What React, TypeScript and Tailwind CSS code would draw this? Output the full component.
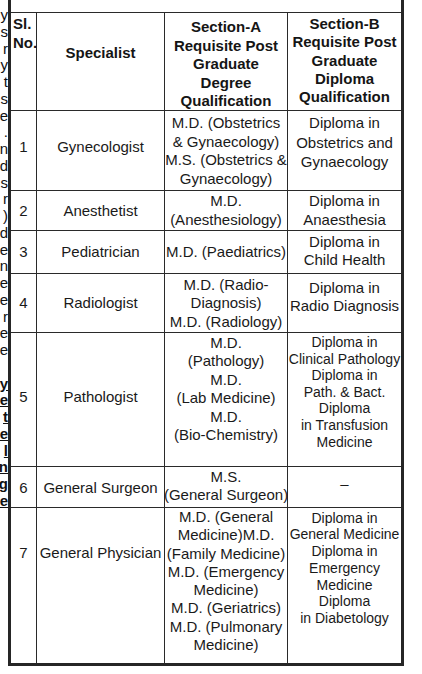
import React from 'react';

type Cell = {
  lines: string[];
  pt: string;
  leading: string;
  size?: string;
};

type Row = {
  h: string;
  no: Cell;
  spec: Cell;
  a: Cell;
  b: Cell;
  last?: boolean;
};

// last letters of the neighbouring column's text, seen at the left edge
const margin: { t: string; bold?: boolean }[] = [
  { t: 'y' }, { t: 's' }, { t: 'r' }, { t: 'y' }, { t: 't' },
  { t: 's' }, { t: 'e' }, { t: '.' }, { t: 'n' }, { t: 'd' }, { t: 's' },
  { t: 'r' }, { t: ')' }, { t: 'd' }, { t: 'e' }, { t: 'n' }, { t: 'e' },
  { t: 'e' }, { t: 'r' }, { t: 'e' }, { t: 'e' }, { t: '\u00a0' },
  { t: 'y', bold: true }, { t: 'e', bold: true }, { t: 't', bold: true },
  { t: 'e', bold: true }, { t: 'l', bold: true }, { t: 'n', bold: true },
  { t: 'g', bold: true }, { t: 'e', bold: true },
];

const rows: Row[] = [
  {
    h: 'h-[80px]',
    no: { lines: ['1'], pt: 'pt-[27px]', leading: 'leading-[18.5px]' },
    spec: { lines: ['Gynecologist'], pt: 'pt-[27px]', leading: 'leading-[18.5px]' },
    a: {
      lines: ['M.D. (Obstetrics', '& Gynaecology)', 'M.S. (Obstetrics &', 'Gynaecology)'],
      pt: 'pt-[3px]',
      leading: 'leading-[18.6px]',
    },
    b: {
      lines: ['Diploma in', 'Obstetrics and', 'Gynaecology'],
      pt: 'pt-[2px]',
      leading: 'leading-[19.5px]',
    },
  },
  {
    h: 'h-[40px]',
    no: { lines: ['2'], pt: 'pt-[9.5px]', leading: 'leading-[19px]' },
    spec: { lines: ['Anesthetist'], pt: 'pt-[9.5px]', leading: 'leading-[19px]' },
    a: { lines: ['M.D.', '(Anesthesiology)'], pt: 'pt-0', leading: 'leading-[19px]' },
    b: { lines: ['Diploma in', 'Anaesthesia'], pt: 'pt-0', leading: 'leading-[19px]' },
  },
  {
    h: 'h-[43px]',
    no: { lines: ['3'], pt: 'pt-[11.5px]', leading: 'leading-[18.5px]' },
    spec: { lines: ['Pediatrician'], pt: 'pt-[11.5px]', leading: 'leading-[18.5px]' },
    a: { lines: ['M.D. (Paediatrics)'], pt: 'pt-[11.5px]', leading: 'leading-[18.5px]' },
    b: { lines: ['Diploma in', 'Child Health'], pt: 'pt-[2px]', leading: 'leading-[18px]' },
  },
  {
    h: 'h-[59px]',
    no: { lines: ['4'], pt: 'pt-[20px]', leading: 'leading-[18.5px]' },
    spec: { lines: ['Radiologist'], pt: 'pt-[20px]', leading: 'leading-[18.5px]' },
    a: {
      lines: ['M.D. (Radio-', 'Diagnosis)', 'M.D. (Radiology)'],
      pt: 'pt-[2px]',
      leading: 'leading-[18.3px]',
    },
    b: { lines: ['Diploma in', 'Radio Diagnosis'], pt: 'pt-[4.5px]', leading: 'leading-[18.7px]' },
  },
  {
    h: 'h-[134px]',
    no: { lines: ['5'], pt: 'pt-[54.5px]', leading: 'leading-[18.5px]' },
    spec: { lines: ['Pathologist'], pt: 'pt-[54.5px]', leading: 'leading-[18.5px]' },
    a: {
      lines: ['M.D.', '(Pathology)', 'M.D.', '(Lab Medicine)', 'M.D.', '(Bio-Chemistry)'],
      pt: 'pt-[1px]',
      leading: 'leading-[18.4px]',
    },
    b: {
      lines: [
        'Diploma in',
        'Clinical Pathology',
        'Diploma in',
        'Path. & Bact.',
        'Diploma',
        'in Transfusion',
        'Medicine',
      ],
      pt: 'pt-[1px]',
      leading: 'leading-[16.6px]',
      size: 'text-[14px]',
    },
  },
  {
    h: 'h-[41px]',
    no: { lines: ['6'], pt: 'pt-[12px]', leading: 'leading-[18.5px]' },
    spec: { lines: ['General Surgeon'], pt: 'pt-[12px]', leading: 'leading-[18.5px]' },
    a: { lines: ['M.S.', '(General Surgeon)'], pt: 'pt-[0.5px]', leading: 'leading-[18.3px]' },
    b: { lines: ['\u2013'], pt: 'pt-[8px]', leading: 'leading-[18.5px]' },
  },
  {
    h: 'h-[158px]',
    last: true,
    no: { lines: ['7'], pt: 'pt-[36px]', leading: 'leading-[18.5px]' },
    spec: { lines: ['General Physician'], pt: 'pt-[36px]', leading: 'leading-[18.5px]' },
    a: {
      lines: [
        'M.D. (General',
        'Medicine)M.D.',
        '(Family Medicine)',
        'M.D. (Emergency',
        'Medicine)',
        'M.D. (Geriatrics)',
        'M.D. (Pulmonary',
        'Medicine)',
      ],
      pt: 'pt-0',
      leading: 'leading-[18.3px]',
    },
    b: {
      lines: [
        'Diploma in',
        'General Medicine',
        'Diploma in',
        'Emergency',
        'Medicine',
        'Diploma',
        'in Diabetology',
      ],
      pt: 'pt-[1.5px]',
      leading: 'leading-[16.8px]',
      size: 'text-[14px]',
    },
  },
];

function TextCell({ cell, border }: { cell: Cell; border: boolean }) {
  return (
    <div
      className={`flex flex-col items-center text-center ${cell.pt} ${cell.leading} ${
        cell.size ?? 'text-[15px]'
      } ${border ? 'border-r border-[#2a2a2a]' : ''}`}
    >
      {cell.lines.map((l, i) => (
        <span key={i} className="block whitespace-nowrap">
          {l}
        </span>
      ))}
    </div>
  );
}

export default function App() {
  return (
    <div className="min-h-screen bg-white flex items-start font-['Liberation_Sans',Arial,sans-serif] text-[#1a1a1a]">
      {/* left edge: clipped text of the previous column */}
      <div className="w-[8px] pt-[7px] text-[15px] leading-[16.75px] text-[#111]">
        {margin.map((m, i) => (
          <div key={i} className="flex justify-end">
            <span className={m.bold ? 'font-bold underline' : ''}>{m.t}</span>
          </div>
        ))}
      </div>

      <div className="w-[396px] border-x-[3px] border-[#262626] flex flex-col">
        <div className="h-[13px] border-b border-[#2a2a2a]" />

        {/* header */}
        <div className="h-[98px] grid grid-cols-[26px_128px_123px_113px] border-b border-[#2a2a2a] font-bold text-[15px] text-[#151515]">
          <div className="border-r border-[#2a2a2a] pt-[1px] pl-[2px] leading-[19px]">
            <span className="block">Sl.</span>
            <span className="block">No.</span>
          </div>
          <div className="border-r border-[#2a2a2a] pt-[31px] leading-[18.5px] text-center">Specialist</div>
          <div className="border-r border-[#2a2a2a] pt-[5px] leading-[18.5px] text-center">
            <span className="block">Section-A</span>
            <span className="block whitespace-nowrap">Requisite Post</span>
            <span className="block">Graduate</span>
            <span className="block">Degree</span>
            <span className="block">Qualification</span>
          </div>
          <div className="pt-[2px] leading-[18.3px] text-center">
            <span className="block">Section-B</span>
            <span className="block whitespace-nowrap">Requisite Post</span>
            <span className="block">Graduate</span>
            <span className="block">Diploma</span>
            <span className="block">Qualification</span>
          </div>
        </div>

        {rows.map((r, i) => (
          <div
            key={i}
            className={`${r.h} grid grid-cols-[26px_128px_123px_113px] ${
              r.last ? 'border-b-[3px] border-[#262626]' : 'border-b border-[#2a2a2a]'
            }`}
          >
            <TextCell cell={r.no} border />
            <TextCell cell={r.spec} border />
            <TextCell cell={r.a} border />
            <TextCell cell={r.b} border={false} />
          </div>
        ))}
      </div>
    </div>
  );
}
